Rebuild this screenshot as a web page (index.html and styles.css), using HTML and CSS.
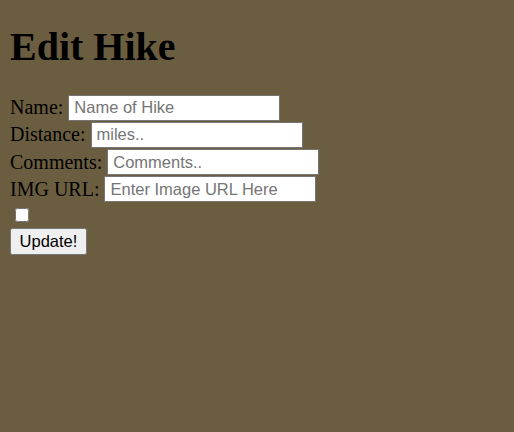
FILE: index.html
```html
<!DOCTYPE html>
<html>
<head>
<meta charset="utf-8">
<link rel="stylesheet" href="styles.css">
</head>
<body>
<h1 class="title">Edit Hike</h1>
<form class="form">
<div class="rows">
<label>Name: <input class="field" type="text" placeholder="Name of Hike"></label><br>
<label>Distance: <input class="field" type="text" placeholder="miles.."></label><br>
<label>Comments: <input class="field" type="text" placeholder="Comments.."></label><br>
<label>IMG URL: <input class="field" type="text" placeholder="Enter Image URL Here"></label>
</div>
<div class="check-row"><input class="check" type="checkbox"></div>
<button class="btn" type="button">Update!</button>
</form>
</body>
</html>
```
FILE: styles.css
```css
html, body {
  background: #6b5e40;
}
body {
  margin: 8px 10px;
  font-family: "Liberation Serif", serif;
  font-size: 20px;
  color: #000;
}
.title {
  font-size: 40px;
  font-weight: bold;
  margin: 15px 0 24px;
}
.rows {
  line-height: 27.33px;
}
.field {
  font-family: "Liberation Sans", Arial, sans-serif;
  font-size: 16.5px;
  width: 212px;
  height: 26px;
  box-sizing: border-box;
  padding: 1px 5px;
  border: 1px solid #767676;
  background: #fff;
  margin: 0;
  vertical-align: 1px;
}
.field::placeholder {
  color: #757575;
}
.check-row {
  display: flex;
  padding: 5px 0 0;
}
.check {
  width: 14px;
  height: 14px;
  margin: 0 0 0 5px;
}
.btn {
  display: block;
  box-sizing: border-box;
  font-family: "Liberation Sans", Arial, sans-serif;
  font-size: 16.5px;
  width: 77px;
  height: 27px;
  padding: 0 6px;
  margin-top: 6px;
}
```
